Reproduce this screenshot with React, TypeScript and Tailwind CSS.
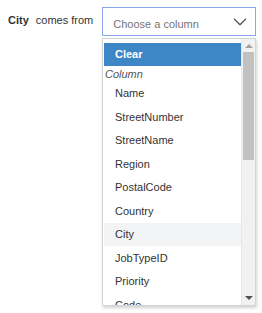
import { ChevronDown } from "lucide-react";

const columns = [
  "Name",
  "StreetNumber",
  "StreetName",
  "Region",
  "PostalCode",
  "Country",
  "City",
  "JobTypeID",
  "Priority",
  "Code",
];

export default function App() {
  return (
    <div className="w-[262px] h-[313px] bg-white text-[11px] text-[#333] relative" style={{ fontFamily: '"Liberation Sans", Arial, sans-serif' }}>
      <div className="flex items-start pt-[7px] whitespace-nowrap">
        <span className="font-bold ml-[8px] mt-[5px] shrink-0">City</span>
        <span className="ml-[7px] mt-[5px] shrink-0">comes from</span>
        <div className="ml-[9px] w-[154px] shrink-0 h-[29px] border border-[#8aa6ec] flex items-center justify-between pl-[10px] pr-[4px] bg-white">
          <span className="text-[#757575] mt-[5px]">Choose a column</span>
          <ChevronDown className="w-[22px] h-[22px] text-[#555]" strokeWidth={1.4} />
        </div>
      </div>

      {/* Menu déroulant */}
      <div className="absolute left-[102px] top-[38px] w-[154px] h-[268px] border border-[#d4d4d4] bg-white shadow-[1px_2px_3px_rgba(0,0,0,0.18)] overflow-hidden flex">
        <div className="flex-1 pt-[4px] pl-[1px]">
          <div className="h-[23px] bg-[#3e87c7] text-white font-bold flex items-center pl-[11px]">Clear</div>
          <div className="h-[15.5px] italic text-[#555] flex items-center pl-[1px]">Column</div>
          {columns.map((c) => (
            <div
              key={c}
              className={`h-[23.5px] flex items-center pl-[11px] ${c === "City" ? "bg-[#f2f3f5]" : ""}`}
            >
              {c}
            </div>
          ))}
        </div>
        {/* Barre de défilement */}
        <div className="w-[14px] bg-[#f1f1f1] flex flex-col items-center border-l border-[#e6e6e6]">
          <div className="h-[13px] flex items-center justify-center">
            <div className="w-0 h-0 border-l-[4px] border-r-[4px] border-b-[4px] border-l-transparent border-r-transparent border-b-[#a3a3a3]" />
          </div>
          <div className="w-[11px] h-[108px] bg-[#c1c1c1]" />
          <div className="flex-1" />
          <div className="h-[14px] flex items-center justify-center">
            <div className="w-0 h-0 border-l-[4px] border-r-[4px] border-t-[4px] border-l-transparent border-r-transparent border-t-[#505050]" />
          </div>
        </div>
      </div>
    </div>
  );
}
